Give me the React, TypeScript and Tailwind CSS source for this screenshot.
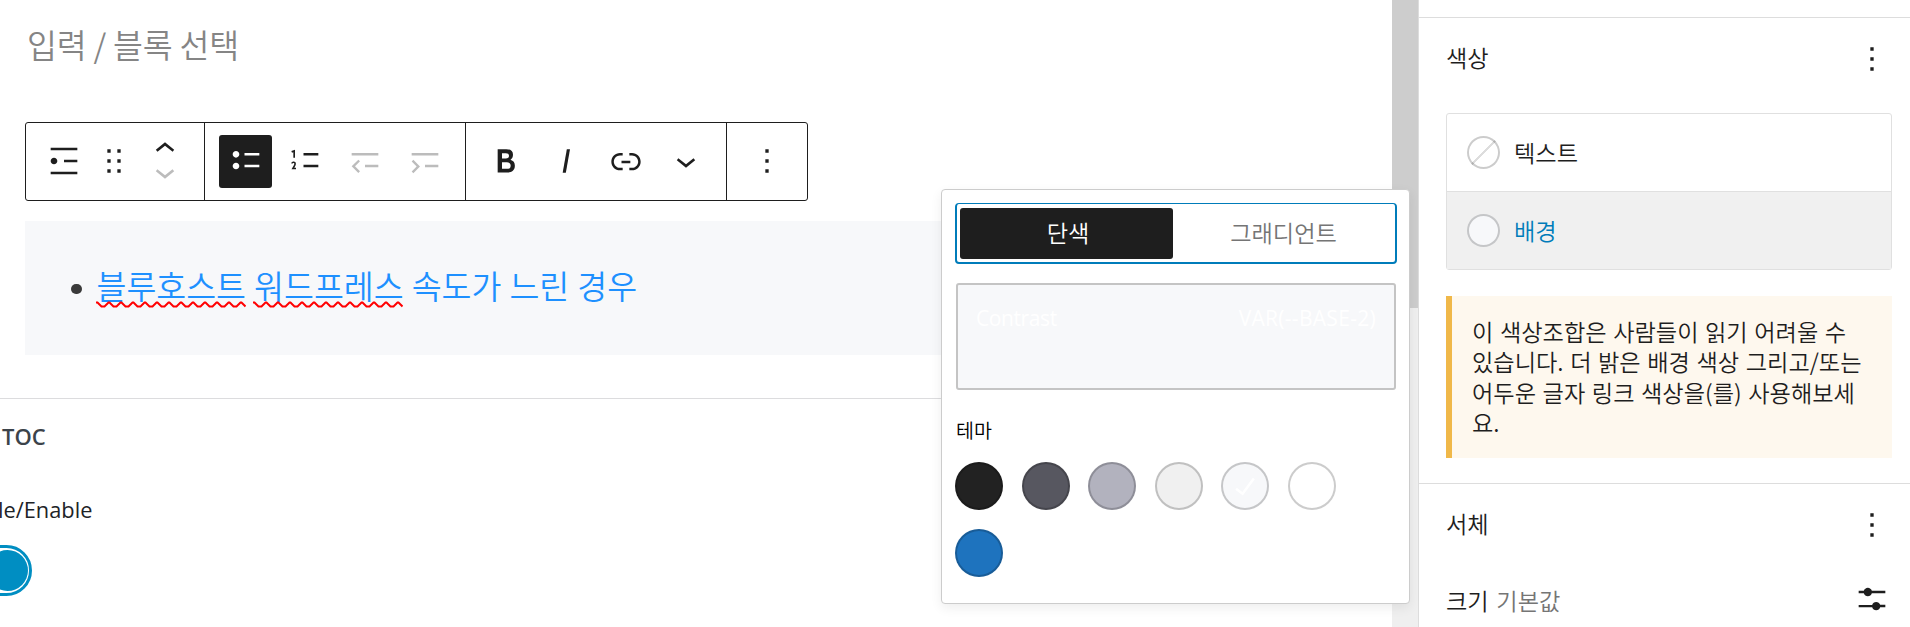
import clsx from "clsx";
import type { ReactNode } from "react";

const ICONS = {
  listItem:
    "M4 4v1.5h16V4H4zm8 7.2v1.5h8v-1.5h-8zM6 10c-1.1 0-2 .9-2 2s.9 2 2 2 2-.9 2-2-.9-2-2-2zM4 18.5V20h16v-1.5H4z",
  drag: "M8 7h2V5H8v2zm0 6h2v-2H8v2zm0 6h2v-2H8v2zm6-14v2h2V5h-2zm0 8h2v-2h-2v2zm0 6h2v-2h-2v2z",
  up: "M6.5 12.4L12 8l5.5 4.4-.9 1.2L12 10l-4.5 3.6-1-1.2z",
  down: "M17.5 11.6L12 16l-5.5-4.4.9-1.2L12 14l4.5-3.6 1 1.2z",
  bullets:
    "M11.1 15.8H20v-1.5h-8.9v1.5zm0-8.6v1.5H20V7.2h-8.9zM6 13c-1.1 0-2 .9-2 2s.9 2 2 2 2-.9 2-2-.9-2-2-2zm0-7c-1.1 0-2 .9-2 2s.9 2 2 2 2-.9 2-2-.9-2-2-2z",
  numbers:
    "M11.1 15.8H20v-1.5h-8.9v1.5zm0-8.6v1.5H20V7.2h-8.9zM5 6.7V10h1V5.3L3.8 6l.4 1 .8-.3zm-.4 5.7c-.3.1-.5.2-.7.3l.1 1.1c.2-.2.5-.4.8-.5.3-.1.6 0 .7.1.2.3 0 .8-.2 1.1-.5.8-.9 1.6-1.4 2.5h2.7v-1h-1c.3-.6.8-1.4.9-2.1.1-.3 0-.8-.2-1.1-.5-.6-1.3-.5-1.7-.4z",
  outdent:
    "M4 7.2v1.5h16V7.2H4zm8 8.6h8v-1.5h-8v1.5zm-4-4.6l-4 4 4 4 1-1-3-3 3-3-1-1z",
  indent:
    "M4 7.2v1.5h16V7.2H4zm8 8.6h8v-1.5h-8v1.5zm-8-3.5l3 3-3 3 1 1 4-4-4-4-1 1z",
  bold: "M14.7 11.3c1-.6 1.5-1.6 1.5-3 0-2.3-1.3-3.4-4-3.4H7v14h5.8c1.4 0 2.5-.3 3.3-1 .8-.7 1.2-1.7 1.2-2.9.1-1.9-.8-3.1-2.6-3.7zm-5.1-4h2.3c.6 0 1.1.1 1.4.4.3.3.5.7.5 1.2s-.2 1-.5 1.2c-.3.3-.8.4-1.4.4H9.6V7.3zm4.6 9c-.4.3-1 .4-1.7.4H9.6v-3.9h2.9c.7 0 1.3.2 1.7.5.4.3.6.8.6 1.5s-.2 1.2-.6 1.5z",
  italic: "M12.5 5L10 19h1.9l2.5-14z",
  link: "M15.6 7.2H14v1.5h1.6c2 0 3.7 1.7 3.7 3.7s-1.7 3.7-3.7 3.7H14v1.5h1.6c2.8 0 5.2-2.3 5.2-5.2 0-2.9-2.3-5.2-5.2-5.2zM4.7 12.4c0-2 1.7-3.7 3.7-3.7H10V7.2H8.4c-2.9 0-5.2 2.3-5.2 5.2 0 2.9 2.3 5.2 5.2 5.2H10v-1.5H8.4c-2 0-3.7-1.7-3.7-3.7zm4.6.9h5.3v-1.5H9.3v1.5z",
  more: "M13 19h-2v-2h2v2zm0-6h-2v-2h2v2zm0-6h-2V5h2v2z",
  settings:
    "M14.5 13.8c-1.1 0-2.1.7-2.4 1.8H4V17h8.1c.3 1 1.3 1.8 2.4 1.8s2.1-.7 2.4-1.8H20v-1.5h-3.1c-.3-1-1.3-1.7-2.4-1.7zM11.9 7c-.3-1-1.3-1.8-2.4-1.8S7.4 6 7.1 7H4v1.5h3.1c.3 1 1.3 1.8 2.4 1.8s2.1-.7 2.4-1.8H20V7h-8.1z",
};

function Icon({ name, className }: { name: keyof typeof ICONS; className?: string }) {
  return (
    <svg
      viewBox="0 0 24 24"
      fill="currentColor"
      className={clsx("h-10 w-10 shrink-0", className)}
    >
      <path d={ICONS[name]} />
    </svg>
  );
}

function ToolButton({
  name,
  active,
  disabled,
}: {
  name: keyof typeof ICONS;
  active?: boolean;
  disabled?: boolean;
}) {
  return (
    <button
      className={clsx(
        "flex h-[53px] w-[53px] items-center justify-center rounded-[3px]",
        active && "bg-[#1e1e1e] text-white",
        disabled && "text-[#bcbcbc]"
      )}
    >
      <Icon name={name} className="-mt-[2px]" />
    </button>
  );
}

function Misspelled({ children }: { children: ReactNode }) {
  return (
    <span className="relative inline-block">
      {children}
      <svg
        className="absolute left-[-1px] top-[40px] h-[7px] w-[150px]"
        viewBox="0 0 150 7"
        fill="none"
        stroke="#f00"
        strokeWidth="2"
      >
        <path d="M0 1.5H1.5l4 4h3l4-4h1l4 4h3l4-4h1l4 4h3l4-4h1l4 4h3l4-4h1l4 4h3l4-4h1l4 4h3l4-4h1l4 4h3l4-4h1l4 4h3l4-4h1l4 4h3l4-4h1l4 4h3l4-4h1l4 4h3l4-4h1l4 4h3l4-4h1l4 4" />
      </svg>
    </span>
  );
}

function Toolbar() {
  return (
    <div className="ml-[25px] mt-[56px] flex h-[79px] w-[783px] rounded-[3px] border border-[#1e1e1e] text-[#1e1e1e]">
      <div className="flex w-[179px] items-center border-r border-[#1e1e1e] pb-[2px] pl-[18px]">
        <Icon name="listItem" />
        <Icon name="drag" className="ml-[10px]" />
        <div className="ml-[11px] flex flex-col">
          <Icon name="up" className="-mb-[9px]" />
          <Icon name="down" className="-mt-[8px] text-[#bcbcbc]" />
        </div>
      </div>
      <div className="flex w-[261px] items-center gap-[6.7px] border-r border-[#1e1e1e] pl-[14px]">
        <ToolButton name="bullets" active />
        <ToolButton name="numbers" />
        <ToolButton name="outdent" disabled />
        <ToolButton name="indent" disabled />
      </div>
      <div className="flex w-[261px] items-center gap-[7px] border-r border-[#1e1e1e] pl-[13px]">
        <ToolButton name="bold" />
        <ToolButton name="italic" />
        <ToolButton name="link" />
        <ToolButton name="down" />
      </div>
      <div className="flex flex-1 items-center justify-center pb-[2px]">
        <Icon name="more" />
      </div>
    </div>
  );
}

function Editor() {
  return (
    <main className="h-full w-[1392px] shrink-0 overflow-hidden">
      <p className="ml-[27px] pt-[22px] text-[32.5px] leading-[44px] tracking-[-0.2px] text-[#858585]">
        입력 / 블록 선택
      </p>
      <Toolbar />
      <ul className="ml-[25px] mt-5 flex h-[134px] items-center bg-[#f7f8fa]">
        <li className="flex items-center pb-[7px] pl-[46px] text-[32.5px] leading-[48px] text-[#1e90ff]">
          <span className="mr-[15px] mt-[9px] h-[10.5px] w-[10.5px] rounded-full bg-[#3a3a3a]" />
          <span className="whitespace-pre [word-spacing:0.8px]">
            <Misspelled>블루호스트</Misspelled> <Misspelled>워드프레스</Misspelled> 속도가 느린 경우
          </span>
        </li>
      </ul>
      <section className="mt-[43px] border-t border-[#dcdcde] font-['Open_Sans','Noto_Sans',sans-serif] font-normal">
        <h2 className="mt-[22px] pl-[2px] text-[22px] font-semibold leading-[30px] text-[#3c434a]">
          TOC
        </h2>
        <p className="-ml-[2px] mt-[43px] text-[21.8px] leading-[32px] text-[#1d2327]">
          le/Enable
        </p>
        <div className="-ml-[60px] mt-[19px] flex h-[51px] w-[92px] items-center justify-end rounded-full border-[3px] border-[#008ec2] pr-[1px]">
          <span className="h-[41px] w-[41px] rounded-full bg-[#008ec2]" />
        </div>
        <p className="mt-[23px] whitespace-nowrap pl-[6px] text-[21px] leading-[32px] text-[#646970]">
          a block can move or remove a few items when you are in some area of a page
        </p>
      </section>
    </main>
  );
}

function Swatch({ className, children }: { className: string; children?: ReactNode }) {
  return (
    <button
      className={clsx(
        "flex h-[48px] w-[48px] items-center justify-center rounded-full border-2 border-black/20 bg-clip-border",
        className
      )}
    >
      {children}
    </button>
  );
}

function ColorPopover() {
  return (
    <div className="absolute left-[941px] top-[189px] h-[415px] w-[469px] rounded-[4px] border border-[#ccc] bg-white px-[13px] pt-[13px] shadow-[0_4px_12px_rgba(0,0,0,0.07)]">
      <div className="flex h-[61px] w-[442px] rounded-[4px] border-2 border-t-[1px] border-[#007cba] p-[3px] pt-[4px] text-[23.2px]">
        <div className="flex h-[51px] w-[213px] items-center justify-center rounded-[3px] bg-[#1e1e1e] pb-[3px] pl-[3px] text-white">
          단색
        </div>
        <div className="flex h-[51px] flex-1 items-center justify-center pb-[3px] pl-[2px] text-[#757575]">
          그래디언트
        </div>
      </div>
      <div className="ml-[1px] mt-[19px] flex h-[107px] w-[440px] justify-between rounded-[3px] border-2 border-[#c4c4c4] bg-[#f7f8fa] px-[18px] pt-[18px] font-['Open_Sans','Noto_Sans',sans-serif] text-[21px] font-normal leading-[30px] text-white">
        <span className="tracking-[-0.4px]">Contrast</span>
        <span className="tracking-[0.3px]">VAR(--BASE-2)</span>
      </div>
      <h3 className="ml-[1px] mt-[26px] text-[19.5px] leading-[28px] text-black">테마</h3>
      <div className="mt-[18px] flex flex-wrap gap-x-[18.5px] gap-y-[19px]">
        <Swatch className="bg-[#222]" />
        <Swatch className="bg-[#575760]" />
        <Swatch className="bg-[#b2b2be]" />
        <Swatch className="bg-[#f0f0f0]" />
        <Swatch className="bg-[#f7f8fa]">
          <svg viewBox="0 0 24 24" className="h-10 w-10 shrink-0" fill="#fff">
            <path d="M16.7 7.1l-6.3 8.5-3.3-2.5-.9 1.2 4.5 3.4L17.9 8z" />
          </svg>
        </Swatch>
        <Swatch className="bg-white" />
        <Swatch className="bg-[#1e73be]" />
      </div>
    </div>
  );
}

const NOTICE = [
  "이 색상조합은 사람들이 읽기 어려울 수",
  "있습니다. 더 밝은 배경 색상 그리고/또는",
  "어두운 글자 링크 색상을(를) 사용해보세",
  "요.",
];

function Sidebar() {
  return (
    <aside className="flex h-full flex-1 flex-col border-l border-[#ddd] bg-white text-[23.2px] text-[#1e1e1e]">
      <section className="mt-[17px] h-[466px] border-t border-[#ddd] pl-[27px] pr-[18px]">
        <header className="flex h-[82px] items-center justify-between">
          <h2 className="-mt-[3px]">색상</h2>
          <Icon name="more" />
        </header>
        <div className="mt-[13px] h-[157px] rounded-[3px] border border-[#e0e0e0]">
          <div className="flex h-[78px] items-center border-b border-[#e0e0e0] pl-[20px]">
            <span className="h-[33px] w-[33px] rounded-full border-2 border-black/20 bg-[linear-gradient(-45deg,transparent_48%,#ddd_48%,#ddd_52%,transparent_52%)]" />
            <span className="-mt-[1px] ml-[14px]">텍스트</span>
          </div>
          <div className="flex h-[77px] items-center bg-[#f0f0f0] pl-[20px]">
            <span className="h-[33px] w-[33px] rounded-full border-2 border-black/20 bg-[#f7f8fa]" />
            <span className="-mt-[1px] ml-[14px] text-[#007cba]">배경</span>
          </div>
        </div>
        <div className="mt-[26px] h-[162px] border-l-[6px] border-[#f0b849] bg-[#fef8ee] pl-[20px] pt-[20px] leading-[30.4px] [word-spacing:1.4px]">
          {NOTICE.map((line) => (
            <p key={line} className="whitespace-nowrap">
              {line}
            </p>
          ))}
        </div>
      </section>
      <section className="flex-1 border-t border-[#ddd] pl-[27px] pr-[18px]">
        <header className="flex h-[82px] items-center justify-between">
          <h2 className="-mt-[3px]">서체</h2>
          <Icon name="more" />
        </header>
        <div className="mt-[13px] flex h-[40px] items-center justify-between">
          <span className="mt-[3px] [word-spacing:2.5px]">
            크기 <span className="text-[#757575]">기본값</span>
          </span>
          <Icon name="settings" />
        </div>
      </section>
    </aside>
  );
}

export default function App() {
  return (
    <div className="relative flex h-[627px] w-[1910px] overflow-hidden bg-white font-['Noto_Sans_CJK_KR',sans-serif] font-[350]">
      <Editor />
      <div className="h-full w-[26px] shrink-0 bg-[#efefef]">
        <div className="h-[308px] bg-[#cdcdcd]" />
      </div>
      <Sidebar />
      <ColorPopover />
    </div>
  );
}
